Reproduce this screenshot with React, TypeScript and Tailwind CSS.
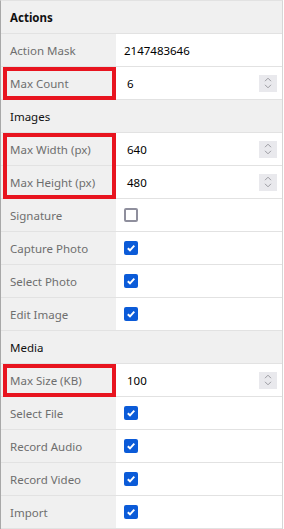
import React from "react";

type Row =
  | { kind: "header"; label: string; bold?: boolean }
  | { kind: "text"; label: string; value: string }
  | { kind: "spin"; label: string; value: string; mark?: boolean }
  | { kind: "check"; label: string; checked: boolean; mark?: boolean };

const rows: Row[] = [
  { kind: "header", label: "Actions", bold: true },
  { kind: "text", label: "Action Mask", value: "2147483646" },
  { kind: "spin", label: "Max Count", value: "6", mark: true },
  { kind: "header", label: "Images" },
  { kind: "spin", label: "Max Width (px)", value: "640" },
  { kind: "spin", label: "Max Height (px)", value: "480" },
  { kind: "check", label: "Signature", checked: false },
  { kind: "check", label: "Capture Photo", checked: true },
  { kind: "check", label: "Select Photo", checked: true },
  { kind: "check", label: "Edit Image", checked: true },
  { kind: "header", label: "Media" },
  { kind: "spin", label: "Max Size (KB)", value: "100", mark: true },
  { kind: "check", label: "Select File", checked: true },
  { kind: "check", label: "Record Audio", checked: true },
  { kind: "check", label: "Record Video", checked: true },
  { kind: "check", label: "Import", checked: true },
];

function Spinner() {
  return (
    <div className="flex h-[17px] w-[18px] flex-col items-center justify-center gap-[2px] bg-[#e9e9ed]">
      <svg width="8" height="5" viewBox="0 0 8 5" fill="none">
        <path d="M1 4.2 4 1.2 7 4.2" stroke="#9a9aa0" strokeWidth="1" />
      </svg>
      <svg width="8" height="5" viewBox="0 0 8 5" fill="none">
        <path d="M1 0.8 4 3.8 7 0.8" stroke="#9a9aa0" strokeWidth="1" />
      </svg>
    </div>
  );
}

function Checkbox({ checked }: { checked: boolean }) {
  if (!checked) {
    return <div className="h-[14px] w-[14px] rounded-[2px] border-2 border-[#8f8f9d] bg-white" />;
  }
  return (
    <div className="flex h-[14px] w-[14px] items-center justify-center rounded-[2px] bg-[#0b5bd8]">
      <svg width="10" height="10" viewBox="0 0 10 10" fill="none">
        <path d="M1.8 5.2 4 7.3 8.3 2.6" stroke="white" strokeWidth="1.9" />
      </svg>
    </div>
  );
}

function PropRow({ row }: { row: Row }) {
  if (row.kind === "header") {
    return (
      <div className="flex h-[33px] items-center border-b border-[#e2e2e2] bg-[#f0f0f0] pl-[9px] pt-[2px]">
        <span className={row.bold ? "font-bold text-[#111]" : "text-[#111]"}>{row.label}</span>
      </div>
    );
  }
  return (
    <div className="relative flex h-[33px] border-b border-[#e2e2e2]">
      <div className="flex w-[115px] items-center bg-[#f0f0f0] pl-[9px] pt-[2px] text-[#6e6e6e]">{row.label}</div>
      <div className="flex flex-1 items-center bg-white">
        {row.kind === "text" && <span className="pl-[8px] pt-[2px] text-black">{row.value}</span>}
        {row.kind === "spin" && (
          <div className="flex flex-1 items-center justify-between pl-[11px] pr-[5px]">
            <span className="pt-[2px] text-black">{row.value}</span>
            <Spinner />
          </div>
        )}
        {row.kind === "check" && (
          <div className="pl-[8px]">
            <Checkbox checked={row.checked} />
          </div>
        )}
      </div>
      {"mark" in row && row.mark && (
        <div className="pointer-events-none absolute left-[2px] top-0 h-[33px] w-[113px] border-4 border-[#e8141f]" />
      )}
    </div>
  );
}

export default function App() {
  const before = rows.slice(0, 4);
  const pair = rows.slice(4, 6);
  const after = rows.slice(6);
  return (
    <div
      className="w-[283px] border-l border-r border-t border-l-[#a8a8a8] border-r-[#d6d6d6] border-t-[#e2e2e2] bg-white text-[11.5px]"
      style={{ fontFamily: '"Noto Sans", "Open Sans", sans-serif' }}
    >
      {before.map((r) => (
        <PropRow key={r.label} row={r} />
      ))}
      <div className="relative">
        {pair.map((r) => (
          <PropRow key={r.label} row={r} />
        ))}
        <div className="pointer-events-none absolute left-[2px] top-0 h-[66px] w-[113px] border-4 border-[#e8141f]" />
      </div>
      {after.map((r) => (
        <PropRow key={r.label} row={r} />
      ))}
    </div>
  );
}
